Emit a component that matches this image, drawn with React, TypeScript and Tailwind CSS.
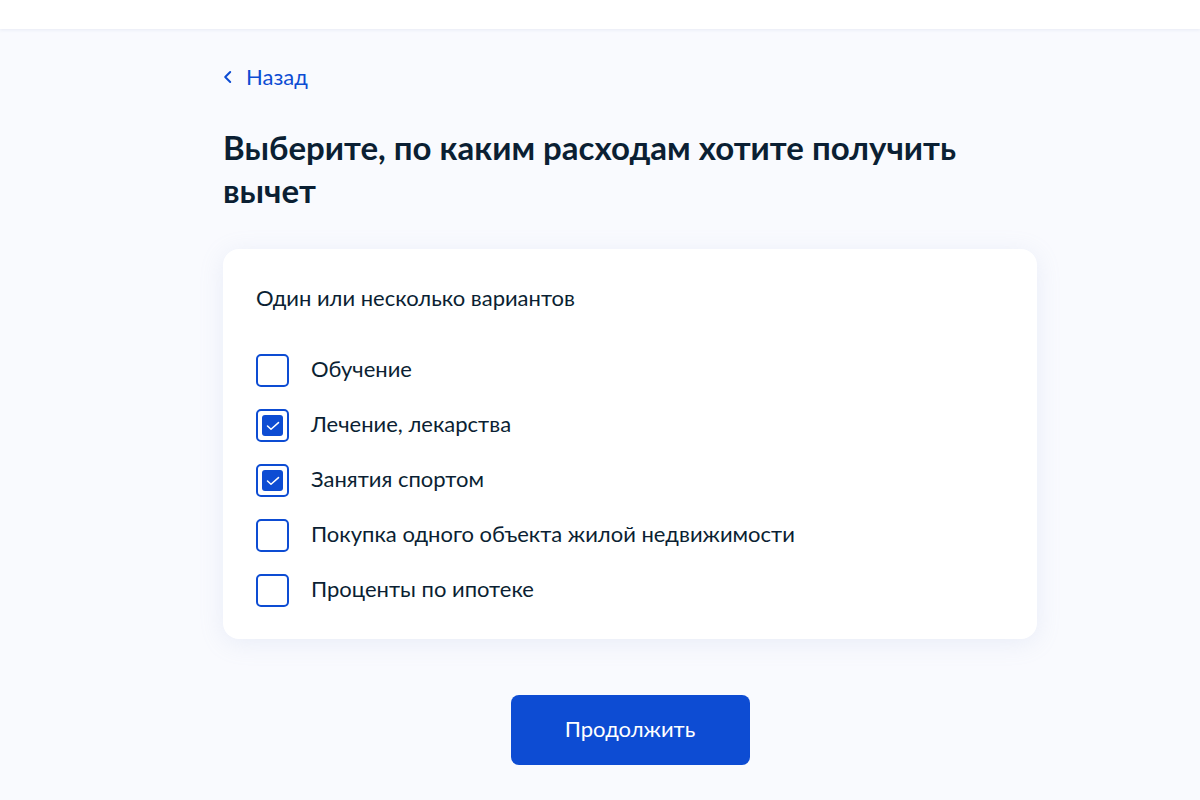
import React, { useState } from "react";

const OPTIONS = [
  "Обучение",
  "Лечение, лекарства",
  "Занятия спортом",
  "Покупка одного объекта жилой недвижимости",
  "Проценты по ипотеке",
];

function Checkbox({ checked }: { checked: boolean }) {
  return (
    <span className="flex h-[33px] w-[33px] shrink-0 items-center justify-center rounded-[5px] border-2 border-[#0d4cd3] bg-white">
      {checked && (
        <span className="flex h-[21px] w-[21px] items-center justify-center rounded-[3px] bg-[#0d4cd3]">
          <svg width="14" height="10" viewBox="0 0 14 10" fill="none">
            <path
              d="M1.5 5 L5 8.3 L12.5 1.6"
              stroke="white"
              strokeWidth="1.5"
              strokeLinecap="round"
              strokeLinejoin="round"
            />
          </svg>
        </span>
      )}
    </span>
  );
}

export default function App() {
  const [selected, setSelected] = useState<boolean[]>([false, true, true, false, false]);

  const toggle = (i: number) =>
    setSelected((s) => s.map((v, j) => (j === i ? !v : v)));

  return (
    <div
      className="min-h-[800px] bg-[#f9fafe] text-[#0b1f33]"
      style={{ fontFamily: "Lato, 'Noto Sans', sans-serif" }}
    >
      <header className="h-[29px] bg-white shadow-[0_1px_3px_rgba(180,190,220,0.25)]" />

      <main className="ml-[223px] flex w-[814px] flex-col pt-[31px]">
        <a href="#" className="flex h-[33px] items-center gap-[13px] text-[22px] leading-[33px] text-[#0d4cd3]">
          <svg width="10" height="16" viewBox="0 0 10 16" fill="none" className="mt-[1px]">
            <path d="M7.2 3 L2.2 8 L7.2 13" stroke="#0d4cd3" strokeWidth="2" strokeLinecap="round" strokeLinejoin="round" />
          </svg>
          <span>Назад</span>
        </a>

        <h1 className="mt-[33px] w-[760px] text-[33px] font-bold leading-[43px] text-[#0b1f33]">
          Выберите, по каким расходам хотите получить вычет
        </h1>

        <section className="mt-[37px] rounded-[16px] bg-white px-[33px] pb-[32px] pt-[32px] shadow-[0_4px_24px_rgba(150,170,210,0.16)]">
          <p className="text-[22px] leading-[33px]">Один или несколько вариантов</p>
          <div className="mt-[40px] flex flex-col gap-[22px]">
            {OPTIONS.map((label, i) => (
              <label
                key={label}
                className="flex h-[33px] cursor-pointer items-center gap-[22px]"
                onClick={() => toggle(i)}
              >
                <Checkbox checked={selected[i]} />
                <span className="mb-[4px] text-[22px] leading-[33px]">{label}</span>
              </label>
            ))}
          </div>
        </section>

        <div className="mt-[56px] flex justify-center">
          <button className="h-[70px] w-[239px] rounded-[8px] bg-[#0d4cd3] pb-[4px] text-[22px] text-white">
            Продолжить
          </button>
        </div>
      </main>
    </div>
  );
}
